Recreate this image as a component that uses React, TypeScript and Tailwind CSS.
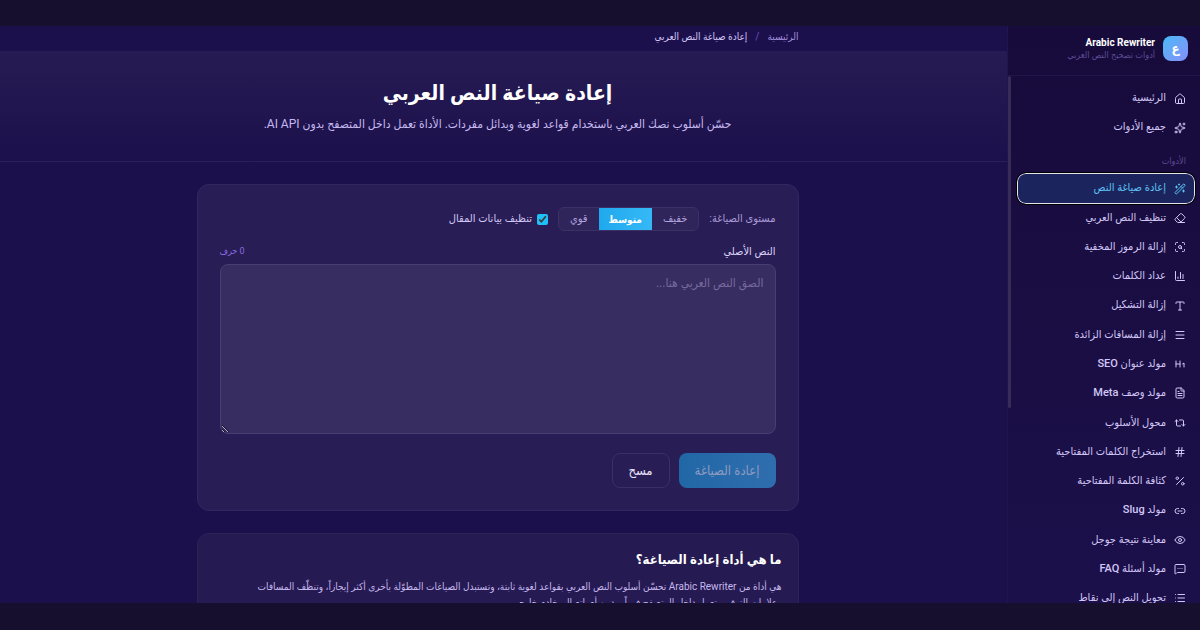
import React, { useState } from "react";
import {
  ChartColumn,
  Eraser,
  Eye,
  FileText,
  Hash,
  Heading1,
  House,
  Link2,
  List,
  Menu,
  MessageSquareMore,
  Percent,
  Repeat2,
  ScanSearch,
  Sparkles,
  Type,
  WandSparkles,
  type LucideIcon,
} from "lucide-react";
import clsx from "clsx";

type NavItem = {
  label: string;
  icon: LucideIcon;
  active?: boolean;
};

const mainLinks: NavItem[] = [
  { label: "الرئيسية", icon: House },
  { label: "جميع الأدوات", icon: Sparkles },
];

const toolLinks: NavItem[] = [
  { label: "إعادة صياغة النص", icon: WandSparkles, active: true },
  { label: "تنظيف النص العربي", icon: Eraser },
  { label: "إزالة الرموز المخفية", icon: ScanSearch },
  { label: "عداد الكلمات", icon: ChartColumn },
  { label: "إزالة التشكيل", icon: Type },
  { label: "إزالة المسافات الزائدة", icon: Menu },
  { label: "مولد عنوان SEO", icon: Heading1 },
  { label: "مولد وصف Meta", icon: FileText },
  { label: "محول الأسلوب", icon: Repeat2 },
  { label: "استخراج الكلمات المفتاحية", icon: Hash },
  { label: "كثافة الكلمة المفتاحية", icon: Percent },
  { label: "مولد Slug", icon: Link2 },
  { label: "معاينة نتيجة جوجل", icon: Eye },
  { label: "مولد أسئلة FAQ", icon: MessageSquareMore },
  { label: "تحويل النص إلى نقاط", icon: List },
];

const levels = ["خفيف", "متوسط", "قوي"];

function NavLink({ item }: { item: NavItem }) {
  const Icon = item.icon;
  return (
    <a
      href="#"
      className={clsx(
        "flex h-full items-center gap-2 rounded-lg px-2 text-[11px] font-medium whitespace-nowrap",
        item.active
          ? "bg-[#1b245c] text-[#5fc3f5] ring-1 ring-[#e4e2ea] outline-1 outline-offset-1 outline-black"
          : "text-[#d2c7f6]",
      )}
    >
      <Icon className="size-3 shrink-0" strokeWidth={2} />
      <span>{item.label}</span>
    </a>
  );
}

function Sidebar() {
  return (
    <aside className="relative flex w-[193px] shrink-0 flex-col border-l border-[#21154a] bg-linear-to-b from-[#170b3b] to-[#1c104b]">
      <div className="flex h-[50px] shrink-0 items-center gap-2 border-b border-[#21164a] px-3 pb-1">
        <div className="flex size-[25px] items-center justify-center rounded-lg bg-linear-to-br from-[#41b8f8] to-[#8290f8] text-[13px] font-bold text-white">
          ع
        </div>
        <div className="leading-3">
          <p className="text-[10px] font-bold text-white">Arabic Rewriter</p>
          <p className="text-[9px] text-[#5c4b94]">أدوات تصحيح النص العربي</p>
        </div>
      </div>
      {/* scroll thumb */}
      <div className="absolute top-[50px] left-0 h-[332px] w-[3px] rounded-full bg-[#372b58]" />
      <nav className="flex min-h-0 flex-1 flex-col pt-2 pr-[6px] pl-[10px]">
        <ul>
          {mainLinks.map((item) => (
            <li key={item.label} className="h-[29px]">
              <NavLink item={item} />
            </li>
          ))}
        </ul>
        <p className="px-2 pt-[13px] pb-[7px] text-[9px] leading-3 text-[#5c4b92]">
          الأدوات
        </p>
        <ul className="-mb-[10px] flex flex-1 flex-col">
          {toolLinks.map((item) => (
            <li key={item.label} className="flex-1">
              <NavLink item={item} />
            </li>
          ))}
        </ul>
      </nav>
    </aside>
  );
}

function RewriteForm() {
  const [level, setLevel] = useState("متوسط");
  const [clean, setClean] = useState(true);
  const [text, setText] = useState("");

  return (
    <section className="rounded-xl border border-[#322760] bg-[#281d54] p-[22px]">
      <div className="flex items-center gap-[10px] text-[11px] whitespace-nowrap">
        <span className="text-[#a999d6]">مستوى الصياغة:</span>
        <div className="flex h-6 overflow-hidden rounded-md border border-[#3c3166] bg-[#30255b]">
          {levels.map((name) => (
            <button
              key={name}
              type="button"
              onClick={() => setLevel(name)}
              className={clsx(
                level === name
                  ? "bg-linear-to-r from-[#1fa9ee] to-[#35b8f6] px-[10px] text-[10px] font-bold text-white"
                  : "px-[11px] font-medium text-[#b3a4de]",
              )}
            >
              {name}
            </button>
          ))}
        </div>
        <label className="flex items-center gap-[5px] font-medium text-[#d2c7f6]">
          <input
            type="checkbox"
            checked={clean}
            onChange={(e) => setClean(e.target.checked)}
            className="size-[11px] accent-[#1fc0f7]"
          />
          تنظيف بيانات المقال
        </label>
      </div>

      <div className="mt-[13px] mb-1 flex h-4 items-center justify-between">
        <label htmlFor="source" className="text-[11px] font-medium text-[#ddd4f8]">
          النص الأصلي
        </label>
        <span className="text-[9px] text-[#8b6be0]">{text.length} حرف</span>
      </div>
      <textarea
        id="source"
        value={text}
        onChange={(e) => setText(e.target.value)}
        placeholder="الصق النص العربي هنا..."
        className="block h-[170px] w-full rounded-lg border border-[#493e72] bg-[#382d61] px-[11px] py-2 text-[12px] leading-5 text-white placeholder:text-[#76699c]"
      />

      <div className="mt-[19px] flex gap-[9px]">
        <button
          type="button"
          disabled
          className="h-[35px] w-[97px] rounded-lg bg-linear-to-r from-[#2167a6] to-[#2f6eae] text-[13px] font-medium text-[#8e9ac2]"
        >
          إعادة الصياغة
        </button>
        <button
          type="button"
          onClick={() => setText("")}
          className="h-[35px] w-[58px] rounded-lg border border-[#3a2f68] text-[13px] font-medium text-[#e9e2fb]"
        >
          مسح
        </button>
      </div>
    </section>
  );
}

export default function App() {
  return (
    <div
      dir="rtl"
      className="flex h-screen flex-col overflow-hidden bg-[#170f2e] pt-[26px] pb-[27px] font-[Roboto,'DejaVu_Sans_Condensed','DejaVu_Sans',sans-serif]"
    >
      <div className="flex min-h-0 flex-1 overflow-hidden bg-[#1c104c]">
        <Sidebar />
        <main className="min-w-0 flex-1 overflow-hidden">
          <div className="border-b border-[#261b57] pr-3">
            <nav className="mx-auto flex h-[25px] max-w-[602px] items-center gap-2 pb-1 text-[10px]">
              <a href="#" className="text-[#a18fdc]">
                الرئيسية
              </a>
              <span className="text-[#6d4fc4]">/</span>
              <span className="text-[#d2c7f6]">إعادة صياغة النص العربي</span>
            </nav>
          </div>

          <header className="h-[110px] border-b border-[#2a1f5b] bg-linear-to-b from-[#261b52] to-[#1c104c] pt-[25px] pr-3 text-center">
            <h1 className="text-[21px] leading-8 font-bold text-white">
              إعادة صياغة النص العربي
            </h1>
            <p className="mt-[3px] text-[12px] leading-6 text-[#c6b9ee]">
              حسّن أسلوب نصك العربي باستخدام قواعد لغوية وبدائل مفردات. الأداة تعمل داخل المتصفح بدون AI API.
            </p>
          </header>

          <div className="pt-[22px] pr-3">
            <div className="mx-auto flex max-w-[602px] flex-col gap-[22px]">
              <RewriteForm />
              <section className="rounded-xl border border-[#2e2359] bg-[#251a51] pt-[14px] pr-4 pb-4 pl-9">
                <h2 className="text-[13px] leading-6 font-bold text-white">
                  ما هي أداة إعادة الصياغة؟
                </h2>
                <p className="mt-[7px] text-[10px] leading-4 text-[#c6b9ee]">
                  هي أداة من Arabic Rewriter تحسّن أسلوب النص العربي بقواعد لغوية ثابتة، وتستبدل الصياغات المطوّلة بأخرى أكثر إيجازاً، وتنظّف المسافات وعلامات الترقيم. تعمل داخل المتصفح فوراً وبدون أي اتصال بخادم خارجي.
                </p>
              </section>
            </div>
          </div>
        </main>
      </div>
    </div>
  );
}
